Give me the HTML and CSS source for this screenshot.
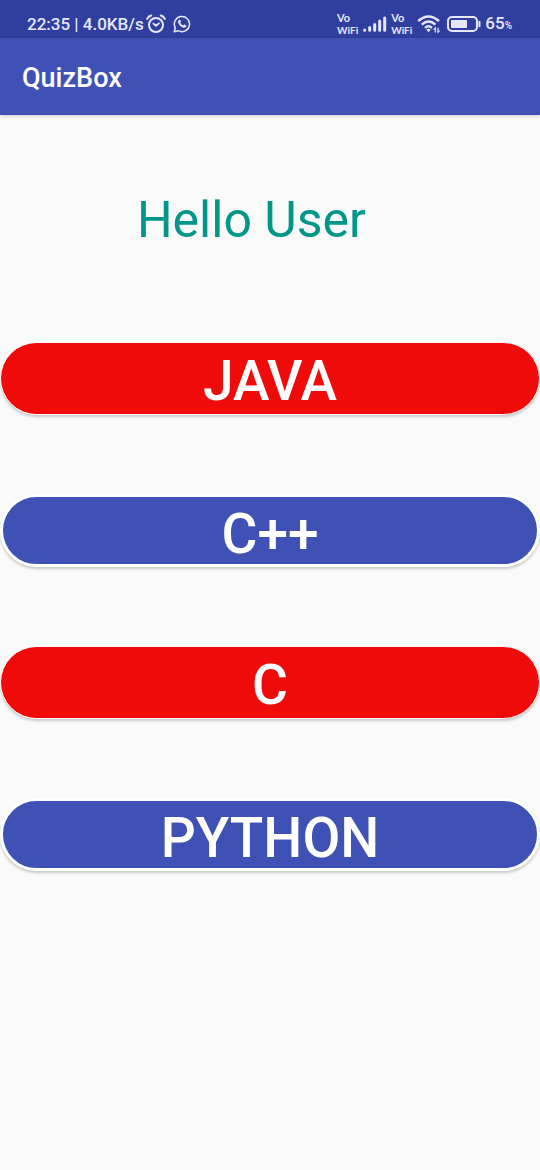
FILE: index.html
```html
<!DOCTYPE html>
<html lang="en">
<head>
<meta charset="utf-8">
<meta name="viewport" content="width=device-width, initial-scale=1">
<title>QuizBox</title>
<link rel="stylesheet" href="styles.css">
</head>
<body>
<div class="status">
  <div class="status-group">
    <span>22:35 | 4.0KB/s</span>
    <svg class="alarm" width="20" height="20" viewBox="0 0 20 20" fill="none" stroke="currentColor" stroke-linecap="round" aria-hidden="true">
      <circle cx="10" cy="11" r="7" stroke-width="2"/>
      <path d="M1.2 4.8 Q2.4 2.2 5.2 1.5 M18.8 4.8 Q17.6 2.2 14.8 1.5" stroke-width="2"/>
      <path d="M7.4 9.6 L10 11.8 L13 9.4" stroke-width="1.8"/>
    </svg>
    <svg class="chat" width="18" height="18" viewBox="0 0 18 18" fill="none" stroke="currentColor" aria-hidden="true">
      <path d="M1.2 16.8 L2.3 12.8 A7.6 7.6 0 1 1 5.2 15.7 Z" stroke-width="1.5" stroke-linejoin="round"/>
      <path d="M6.2 4.8 Q7 4.4 7.3 5.1 L7.9 6.6 Q8 7 7.2 7.8 Q8.2 9.7 10.2 10.6 L11 9.7 Q11.3 9.4 11.7 9.6 L13.2 10.4 Q13.6 10.7 13.3 11.4 Q12.3 13.3 9.9 12.6 Q6.3 11.2 5 7.6 Q4.8 5.7 6.2 4.8 Z" fill="currentColor" stroke="none"/>
    </svg>
  </div>
  <div class="status-group">
    <span class="vowifi"><span class="vo">Vo</span><span>WiFi</span></span>
    <svg class="signal" width="24" height="16" viewBox="0 0 24 16" stroke="currentColor" stroke-width="3" stroke-linecap="round" aria-hidden="true">
      <path d="M1.7 14v.2M6.7 11.5v2.7M11.7 8.5v5.7M16.7 5v9.2M21.7 2v12.2"/>
    </svg>
    <span class="vowifi"><span class="vo">Vo</span><span>WiFi</span></span>
    <svg class="wifi" width="24" height="20" viewBox="0 0 24 20" fill="none" stroke="currentColor" aria-hidden="true">
      <path d="M1.2 7 Q11.5 -2.2 22 7 M4.8 10.6 Q11.5 4.6 18.4 10.6 M8 13.8 Q11.5 10.8 15 13.8" stroke-width="2.4"/>
      <path d="M9.2 15.6 Q11.5 13.9 13.8 15.6 L11.5 18.2 Z" fill="currentColor" stroke="none"/>
      <path d="M18.3 18.5v-4.4l-1.5 1.6M21 13.8v4.4l1.5-1.6" stroke-width="1.2"/>
    </svg>
    <svg class="battery" width="34" height="16" viewBox="0 0 34 16" fill="none" stroke="currentColor" aria-hidden="true">
      <rect x="1" y="1" width="29" height="14" rx="4" stroke-width="2"/>
      <rect x="4" y="4" width="16" height="8" rx="1" fill="currentColor" stroke="none"/>
      <path d="M32.5 5.8v4.4" stroke-width="2" stroke-linecap="round"/>
    </svg>
    <span class="percent">65<small>%</small></span>
  </div>
</div>
<header class="appbar"><h1>QuizBox</h1></header>
<main>
  <p class="greeting">Hello User</p>
  <div class="topics">
    <button type="button" class="topic red">JAVA</button>
    <button type="button" class="topic blue">C++</button>
    <button type="button" class="topic red">C</button>
    <button type="button" class="topic blue">PYTHON</button>
  </div>
</main>
</body>
</html>
```
FILE: styles.css
```css
* { box-sizing: border-box; }
body {
  margin: 0;
  min-height: 100vh;
  background: #fafafa;
  font-family: Roboto, "Liberation Sans", sans-serif;
}
.status {
  display: flex;
  justify-content: space-between;
  height: 38px;
  padding: 10px 28px 0 27px;
  background: #303f9f;
  color: #e6e8fa;
  font-size: 17px;
  line-height: 28px;
  font-weight: 500;
}
.status-group {
  display: flex;
  align-items: center;
  height: 28px;
}
.status svg { flex: none; display: block; }
.alarm { margin-left: 2px; }
.chat { margin-left: 7px; }
.vowifi {
  display: flex;
  flex-direction: column;
  font-family: Lato, sans-serif;
  font-size: 10px;
  line-height: 12px;
  font-weight: 700;
}
.vo { font-size: 11px; }
.signal { margin: 0 4px 0 5px; }
.wifi { margin-left: 5px; }
.battery { margin: 0 4px 0 6px; }
.percent small { font-size: 10px; }
.appbar {
  position: relative;
  padding: 24px 22px 21px;
  background: #3f51b5;
  color: #fff;
  box-shadow: 0 1px 4px rgba(0, 0, 0, 0.2);
}
.appbar h1 {
  margin: 0;
  font-size: 27px;
  line-height: 32px;
  font-weight: 500;
}
.greeting {
  margin: 0;
  padding: 75px 37px 0 0;
  color: #009688;
  font-size: 50px;
  line-height: 60px;
  text-align: center;
}
.topics {
  display: flex;
  flex-direction: column;
  gap: 79px;
  padding-top: 92px;
}
.topic {
  width: 100%;
  height: 73px;
  padding: 5px 0 0;
  border: 1px solid #fff;
  border-radius: 37px;
  color: #fff;
  font-family: inherit;
  font-size: 55px;
  line-height: 64px;
  font-weight: 500;
  box-shadow: 0 2px 3px rgba(0, 0, 0, 0.2);
}
.red { background: #f00a0a; }
.blue { background: #3f51b5; border-width: 3px; }
```
